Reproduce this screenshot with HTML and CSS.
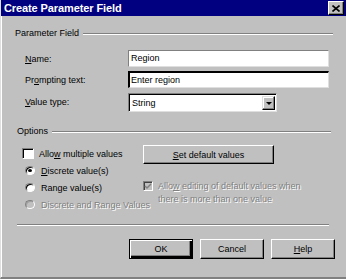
FILE: index.html
```
<!DOCTYPE html>
<html>
<head>
<title>Create Parameter Field</title>
<link rel="stylesheet" href="styles.css">
</head>
<body>
<div class="window">
  <div class="titlebar">
    <span class="title">Create Parameter Field</span>
    <span class="close">
      <svg width="8" height="7" viewBox="0 0 8 7"><path d="M0.5 0.5 L7.5 6.5 M7.5 0.5 L0.5 6.5" stroke="#000" stroke-width="1.6"/></svg>
    </span>
  </div>

  <div class="legend legend-top">
    <span class="legend-text">Parameter Field</span>
    <span class="legend-line"></span>
  </div>

  <div class="form">
    <label><u>N</u>ame:</label>
    <div class="field field-name">Region</div>
    <label>Pr<u>o</u>mpting text:</label>
    <div class="field field-prompt">Enter region</div>
    <label><u>V</u>alue type:</label>
    <div class="combo">
      <span class="combo-text">String</span>
      <span class="combo-btn"><span class="arrow"></span></span>
    </div>
  </div>

  <div class="legend legend-options">
    <span class="legend-text">Options</span>
    <span class="legend-line"></span>
  </div>

  <div class="options">
    <div class="col-left">
      <div class="opt"><span class="check"></span><span>Allo<u>w</u> multiple values</span></div>
      <div class="opt"><span class="radio on"></span><span><u>D</u>iscrete value(s)</span></div>
      <div class="opt"><span class="radio"></span><span>Ran<u>g</u>e value(s)</span></div>
      <div class="opt disabled"><span class="radio off"></span><span>Discrete and Range Values</span></div>
    </div>
    <div class="col-right">
      <div class="btn btn-wide"><span><u>S</u>et default values</span></div>
      <div class="opt-edit disabled">
        <span class="check check-off">
          <svg width="8" height="7" viewBox="0 0 8 7"><path d="M1 3 L3 5 L7 1" stroke="#808080" stroke-width="1.5" fill="none"/></svg>
        </span>
        <div class="edit-text">
          <div>Allo<u>w</u> editing of default values when</div>
          <div>there is more than one value</div>
        </div>
      </div>
    </div>
  </div>

  <div class="separator"></div>

  <div class="buttons">
    <div class="btn btn-default">OK</div>
    <div class="btn">Cancel</div>
    <div class="btn"><span><u>H</u>elp</span></div>
  </div>
</div>
</body>
</html>
```

FILE: styles.css
```
body {
  margin: 0;
  background: #c0c0c0;
}

.window {
  width: 346px;
  height: 279px;
  box-sizing: border-box;
  background: #c0c0c0;
  border-left: 1px solid #dfdfdf;
  border-bottom: 2px solid #808080;
  box-shadow: inset 1px 0 #fff;
  font-family: "Liberation Sans", Arial, sans-serif;
  font-size: 9px;
  color: #000;
  overflow: hidden;
}

.titlebar {
  height: 16px;
  background: #000080;
  color: #fff;
  display: flex;
  align-items: center;
  justify-content: space-between;
  padding: 0 2px 0 3px;
}

.title {
  font-weight: bold;
  font-size: 11px;
  letter-spacing: -0.1px;
}

.close {
  width: 14px;
  height: 12px;
  background: #c0c0c0;
  border: 1px solid;
  border-color: #fff #000 #000 #fff;
  box-shadow: inset -1px -1px #808080;
  display: flex;
  align-items: center;
  justify-content: center;
}

.close svg {
  display: block;
}

/* group headers */
.legend {
  display: flex;
  align-items: center;
  height: 12px;
}

.legend-top {
  margin-top: 11px;
  padding-left: 14px;
  padding-right: 13px;
}

.legend-options {
  margin-top: 14px;
  padding-left: 16px;
  padding-right: 15px;
}

.legend-text {
  white-space: nowrap;
}

.legend-line {
  flex: 1;
  margin-left: 4px;
  border-top: 1px solid #808080;
  border-bottom: 1px solid #fff;
  margin-top: 2px;
}

/* form rows */
.form {
  margin-top: 11px;
  padding-left: 24px;
  display: grid;
  grid-template-columns: 103px 201px;
  grid-template-rows: 17px 17px 19px;
  row-gap: 4px;
  align-items: center;
}

.form label {
  white-space: nowrap;
}

.field {
  height: 17px;
  box-sizing: border-box;
  background: #fff;
  border: 1px solid;
  border-color: #808080 #dfdfdf #dfdfdf #808080;
  padding-left: 2px;
  line-height: 15px;
}

.field-prompt {
  border-width: 2px 1px 1px 2px;
  border-color: #000 #dfdfdf #dfdfdf #000;
  padding-left: 1px;
  line-height: 14px;
}

.combo {
  width: 149px;
  height: 19px;
  box-sizing: border-box;
  background: #fff;
  border: 1px solid;
  border-color: #808080 #dfdfdf #dfdfdf #808080;
  box-shadow: inset 1px 1px #000;
  display: flex;
  align-items: center;
  justify-content: space-between;
  padding: 2px 1px 1px 3px;
  margin-top: 1px;
}

.combo-btn {
  width: 13px;
  height: 14px;
  box-sizing: border-box;
  background: #c0c0c0;
  border: 1px solid;
  border-color: #dfdfdf #000 #000 #dfdfdf;
  box-shadow: inset -1px -1px #808080, inset 1px 1px #fff;
  display: flex;
  align-items: center;
  justify-content: center;
}

.arrow {
  width: 0;
  height: 0;
  border-left: 3px solid transparent;
  border-right: 3px solid transparent;
  border-top: 3px solid #000;
  margin-top: 1px;
}

/* options */
.options {
  margin-top: 8px;
  height: 68px;
  display: flex;
}

.col-left {
  width: 141px;
  flex-shrink: 0;
  padding-left: 21px;
  box-sizing: border-box;
}

.opt {
  height: 17px;
  display: flex;
  align-items: center;
  white-space: nowrap;
}

.check {
  flex-shrink: 0;
  width: 12px;
  height: 11px;
  box-sizing: border-box;
  background: #fff;
  border: 1px solid;
  border-color: #808080 #fff #fff #808080;
  box-shadow: inset 1px 1px #000;
  margin-right: 5px;
  display: flex;
  align-items: center;
  justify-content: center;
}

.check-off {
  width: 10px;
  height: 10px;
  background: #c0c0c0;
  box-shadow: inset 1px 1px #404040;
  margin-right: 5px;
  margin-top: 1px;
}

.radio {
  flex-shrink: 0;
  width: 10px;
  height: 9px;
  box-sizing: border-box;
  border-radius: 50%;
  background: #fff;
  border: 1px solid;
  border-color: #808080 #fff #fff #808080;
  box-shadow: inset 1px 1px #000;
  margin: 0 6px 0 3px;
  display: flex;
  align-items: center;
  justify-content: center;
}

.radio.on::after {
  content: "";
  width: 4px;
  height: 3px;
  border-radius: 50%;
  background: #000;
}

.radio.off {
  background: #c0c0c0;
  box-shadow: inset 1px 1px #a0a0a0;
}

.disabled {
  color: #808080;
  text-shadow: 1px 1px #fff;
}

.col-right {
  padding-left: 1px;
}

.opt-edit {
  margin-top: 16px;
  display: flex;
  align-items: flex-start;
}

.edit-text div {
  height: 13px;
  line-height: 13px;
  white-space: nowrap;
}

/* buttons */
.btn {
  height: 20px;
  width: 64px;
  box-sizing: border-box;
  background: #c0c0c0;
  border: 1px solid;
  border-color: #fff #000 #000 #fff;
  box-shadow: inset -1px -1px #808080;
  display: flex;
  align-items: center;
  justify-content: center;
  white-space: nowrap;
}

.btn-wide {
  width: 131px;
  height: 19px;
}

.btn-default {
  border: 1px solid #000;
  box-shadow: inset 1px 1px #fff, inset -2px -2px #000, inset -3px -3px #808080;
}

.separator {
  margin: 11px 17px 0 16px;
  border-top: 1px solid #808080;
  border-bottom: 1px solid #fff;
}

.buttons {
  margin-top: 13px;
  display: flex;
  justify-content: flex-end;
  gap: 7px;
  padding-right: 11px;
}
```
